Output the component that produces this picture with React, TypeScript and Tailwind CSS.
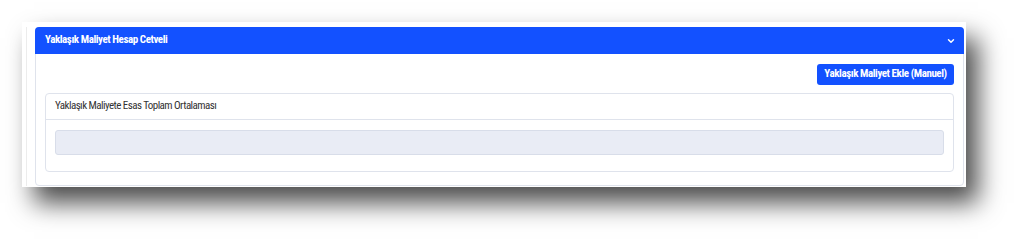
import { ChevronDown } from 'lucide-react';

export default function App() {
  return (
    <div className="h-[243px] w-[1021px] bg-white pl-[22px] pt-[22px] font-['Liberation_Sans_Narrow','Roboto_Condensed',Roboto,sans-serif]">
      <div className="flex h-[165px] w-[944px] bg-white pr-[2px] pt-[5px] pb-[1px] shadow-[12px_16px_24px_rgba(0,0,0,0.7)]">
        <div className="ml-[4px] w-px bg-[#ececec]" />
        <div className="ml-[8px] flex flex-1 flex-col rounded-[4px] border border-[#dfe3ec] bg-white">
          <div className="-mx-px -mt-px flex h-[27px] items-center justify-between rounded-t-[4px] bg-[#1351ff] pl-[10px] pr-[8px] text-[11px] font-bold tracking-[-0.04em] text-white">
            <span>Yaklaşık Maliyet Hesap Cetveli</span>
            <ChevronDown size={10} strokeWidth={3.5} />
          </div>
          <div className="flex flex-col px-[9px] pt-[10px]">
            <div className="flex justify-end">
              <button className="h-[21px] w-[137px] rounded-[3px] bg-[#1351ff] text-[11px] font-bold tracking-[-0.04em] text-white">
                Yaklaşık Maliyet Ekle (Manuel)
              </button>
            </div>
            <div className="mt-[8px] h-[79px] rounded-[4px] border border-[#dfe3ec]">
              <div className="flex h-[26px] items-center border-b border-[#dfe3ec] px-[9px] text-[11px] tracking-[-0.05em] text-[#333]">
                Yaklaşık Maliyete Esas Toplam Ortalaması
              </div>
              <div className="px-[9px] pt-[10px]">
                <div className="h-[25px] rounded-[3px] border border-[#d8dde9] bg-[#e9ecf5]" />
              </div>
            </div>
          </div>
        </div>
      </div>
    </div>
  );
}
